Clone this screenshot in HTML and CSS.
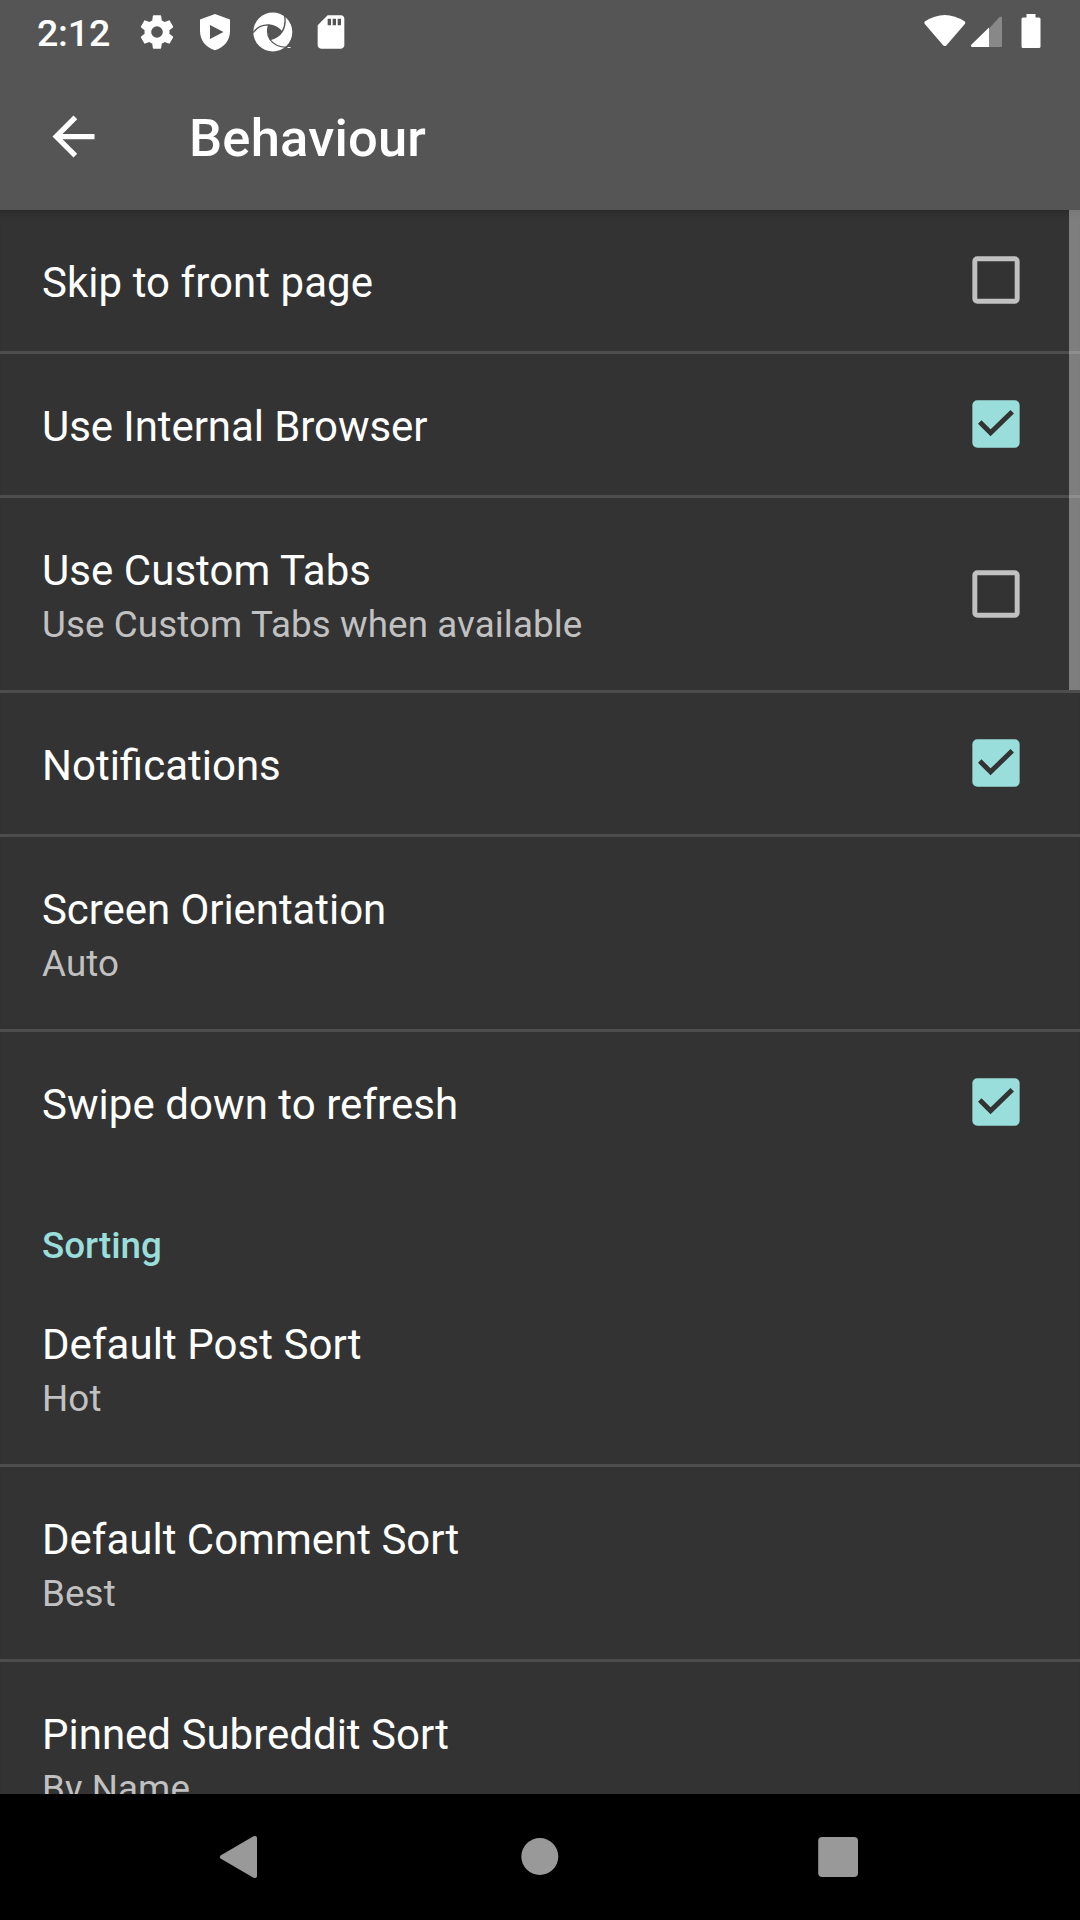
FILE: index.html
```html
<!DOCTYPE html>
<html lang="en">
<head>
<meta charset="utf-8">
<title>Behaviour</title>
<link rel="stylesheet" href="styles.css">
</head>
<body>
<div class="screen">
  <header class="header">
    <div class="status">
      <span class="clock">2:12</span>
      <div class="status-left">
        <svg width="40" height="40" viewBox="0 0 24 24"><path fill="#fff" d="M19.43 12.98c.04-.32.07-.64.07-.98s-.03-.66-.07-.98l2.11-1.65c.19-.15.24-.42.12-.64l-2-3.46c-.12-.22-.39-.3-.61-.22l-2.49 1c-.52-.4-1.08-.73-1.69-.98l-.38-2.65C14.46 2.18 14.25 2 14 2h-4c-.25 0-.46.18-.49.42l-.38 2.65c-.61.25-1.17.59-1.69.98l-2.49-1c-.23-.09-.49 0-.61.22l-2 3.460c-.13.22-.07.49.12.64l2.110 1.650c-.04.32-.07.65-.07.98s.03.66.07.98l-2.110 1.650c-.19.15-.24.42-.12.64l2 3.460c.12.22.39.3.61.22l2.490-1c.52.4 1.080.73 1.690.98l.38 2.650c.03.24.24.42.49.42h4c.25 0 .46-.18.49-.42l.38-2.650c.61-.25 1.170-.59 1.690-.98l2.490 1c.23.09.49 0 .61-.22l2-3.460c.12-.22.07-.49-.12-.64zM12 15.500A3.500 3.500 0 1 1 12 8.500a3.500 3.500 0 0 1 0 7z"/></svg>
        <svg width="40" height="40" viewBox="0 0 40 40"><path fill="#fff" fill-rule="evenodd" d="M20 2 35 7.500V19C35 28 29.500 35.500 20 38.300 10.500 35.500 5 28 5 19V7.500zM15 13V27L28.500 20z"/></svg>
        <svg width="40" height="40" viewBox="0 0 40 40"><circle cx="19.800" cy="20" r="19.500" fill="#fff"/><path fill="#555" d="M15.500 13.500Q24 13 29 20 25.500 26 17 27.500 13.500 20 15.500 13.500z"/><path fill="none" stroke="#555" stroke-width="1.300" d="M.3 20.500Q6 12.500 16 13 24 14 29 20M31.500 3Q33.500 13 29 20 25 26 17 27.500M15.500 13.500Q13 21 17 27.500 22 35 34 35.300"/><path fill="#555" d="M34 36.500V35l6-7v12h-9z"/><path stroke="#fff" d="M34.500 35.500h3"/></svg>
        <svg width="40" height="40" viewBox="0 0 24 24"><path fill="#fff" d="M18 2h-8L4.020 8 4 20c0 1.100.9 2 2 2h12c1.100 0 2-.9 2-2V4c0-1.100-.9-2-2-2zm-6 6h-2V4h2v4zm3 0h-2V4h2v4zm3 0h-2V4h2v4z"/></svg>
      </div>
      <div class="status-right">
        <svg width="42" height="40" viewBox="0 0 42 40"><path fill="#fff" d="M.8 9.500Q20.800-3.500 40.800 9.500 41.600 10.500 40.800 12L22.300 33.500Q20.800 34.500 19.300 33.500L.8 12Q0 10.500.8 9.500z"/></svg>
        <svg width="34" height="40" viewBox="0 0 34 40"><path fill="#888" d="M18 16.500 28.500 5Q31 3.500 31 6V34Q31 35 30 35H18z"/><path fill="#fff" d="M18 15.500V35H1Q-.8 34.500.3 32.800z"/></svg>
        <svg width="20" height="40" viewBox="0 0 20 40"><path fill="#fff" d="M5.500 2h9v3.500H18q1.500 0 1.500 1.500V34.500q0 1.500-1.500 1.500H2Q.5 36 .5 34.500V7Q.5 5.500 2 5.500h3.500z"/></svg>
      </div>
    </div>
    <div class="toolbar">
      <svg width="63" height="63" viewBox="0 0 24 24"><path fill="#fff" d="M20 11H7.830l5.590-5.590L12 4l-8 8 8 8 1.410-1.410L7.830 13H20z"/></svg>
      <h1 class="page-title">Behaviour</h1>
    </div>
  </header>

  <main class="list">
    <div class="row"><div class="text"><div class="title loose">Skip to front page</div></div><span class="check"></span></div>
    <div class="row"><div class="text"><div class="title tight">Use Internal Browser</div></div><span class="check on"><svg width="48" height="48" viewBox="0 0 48 48"><path d="M7.500 22 18.500 33 40.500 11.500"/></svg></span></div>
    <div class="row"><div class="text"><div class="title loose">Use Custom Tabs</div><div class="summary">Use Custom Tabs when available</div></div><span class="check"></span></div>
    <div class="row"><div class="text"><div class="title">Notifications</div></div><span class="check on"><svg width="48" height="48" viewBox="0 0 48 48"><path d="M7.500 22 18.500 33 40.500 11.500"/></svg></span></div>
    <div class="row"><div class="text"><div class="title tight">Screen Orientation</div><div class="summary">Auto</div></div></div>
    <div class="row last"><div class="text"><div class="title loose">Swipe down to refresh</div></div><span class="check on"><svg width="48" height="48" viewBox="0 0 48 48"><path d="M7.500 22 18.500 33 40.500 11.500"/></svg></span></div>
    <h2 class="category">Sorting</h2>
    <div class="row"><div class="text"><div class="title loose">Default Post Sort</div><div class="summary">Hot</div></div></div>
    <div class="row"><div class="text"><div class="title">Default Comment Sort</div><div class="summary">Best</div></div></div>
    <div class="row"><div class="text"><div class="title">Pinned Subreddit Sort</div><div class="summary">By Name</div></div></div>
    <div class="scrollbar"></div>
  </main>

  <nav class="navbar">
    <svg width="42" height="44" viewBox="0 0 42 44"><path fill="#999" d="M2.500 20.500 35.500 1.300Q39 .2 39 3V41Q39 43.800 35.500 42.700L2.500 23.500Q1.300 22 2.500 20.500z"/></svg>
    <svg width="42" height="44" viewBox="0 0 42 44"><circle cx="21.800" cy="21.500" r="18.500" fill="#999"/></svg>
    <svg width="42" height="44" viewBox="0 0 42 44"><rect x="1.200" y="2" width="39.800" height="40" rx="4" fill="#999"/></svg>
  </nav>
</div>
</body>
</html>
```
FILE: styles.css
```css
* { box-sizing: border-box; }

body {
  margin: 0;
  background: #000;
  color: #fff;
  font-family: Roboto, "Noto Sans", sans-serif;
}

svg { display: block; flex: none; }

.screen {
  display: flex;
  flex-direction: column;
  width: 1080px;
  height: 1920px;
  overflow: hidden;
}

.header {
  flex: none;
  height: 210px;
  background: #555;
}

.status {
  display: flex;
  align-items: center;
  height: 63px;
  padding: 0 39px 0 37px;
}

.clock {
  width: 100px;
  padding-top: 2px;
  font-size: 37.5px;
  font-weight: 500;
  letter-spacing: -0.2px;
  line-height: 44px;
}

.status-left { display: flex; gap: 18px; }

.status-right {
  display: flex;
  gap: 5px;
  margin-left: auto;
}

.status-right svg:last-child { margin-left: 11px; }

.toolbar {
  display: flex;
  align-items: center;
  gap: 84px;
  height: 147px;
  padding: 0 42px;
}

.page-title {
  margin: 3px 0 0;
  font-size: 52.5px;
  font-weight: 500;
  letter-spacing: 0.2px;
  line-height: 62px;
}

.list {
  position: relative;
  flex: none;
  height: 1584px;
  overflow: hidden;
  background: #333;
  box-shadow: inset 0 9px 9px -7px rgba(0, 0, 0, 0.25);
}

.row {
  display: flex;
  align-items: center;
  justify-content: space-between;
  padding: 0 60px 0 42px;
  border-bottom: 3px solid #4d4d4d;
}

.row.last { border-bottom: 0; }

.text { padding: 44px 0 40px; }

.title {
  font-size: 42px;
  line-height: 57px;
}

.title.loose { letter-spacing: 0.05px; }
.title.tight { letter-spacing: -0.07px; }

.summary {
  color: #c1c1c1;
  font-size: 36.75px;
  letter-spacing: 0.1px;
  line-height: 51px;
}

.check {
  width: 48px;
  height: 48px;
  margin-bottom: 1px;
  border: 5px solid #c1c1c1;
  border-radius: 5px;
  transform: scale(0.985);
}

.check.on {
  border: 0;
  background: #99dedb;
}

.check path {
  fill: none;
  stroke: #333;
  stroke-width: 5;
}

.category {
  height: 99px;
  margin: 0;
  padding: 47px 42px 0;
  color: #99dedb;
  font-size: 36.75px;
  font-weight: 500;
  line-height: 51px;
}

.scrollbar {
  position: absolute;
  top: 0;
  right: 0;
  width: 11px;
  height: 480px;
  background: rgba(255, 255, 255, 0.37);
}

.navbar {
  display: flex;
  flex: none;
  justify-content: space-between;
  height: 126px;
  padding: 41px 221px 0 218px;
  background: #000;
}
```
